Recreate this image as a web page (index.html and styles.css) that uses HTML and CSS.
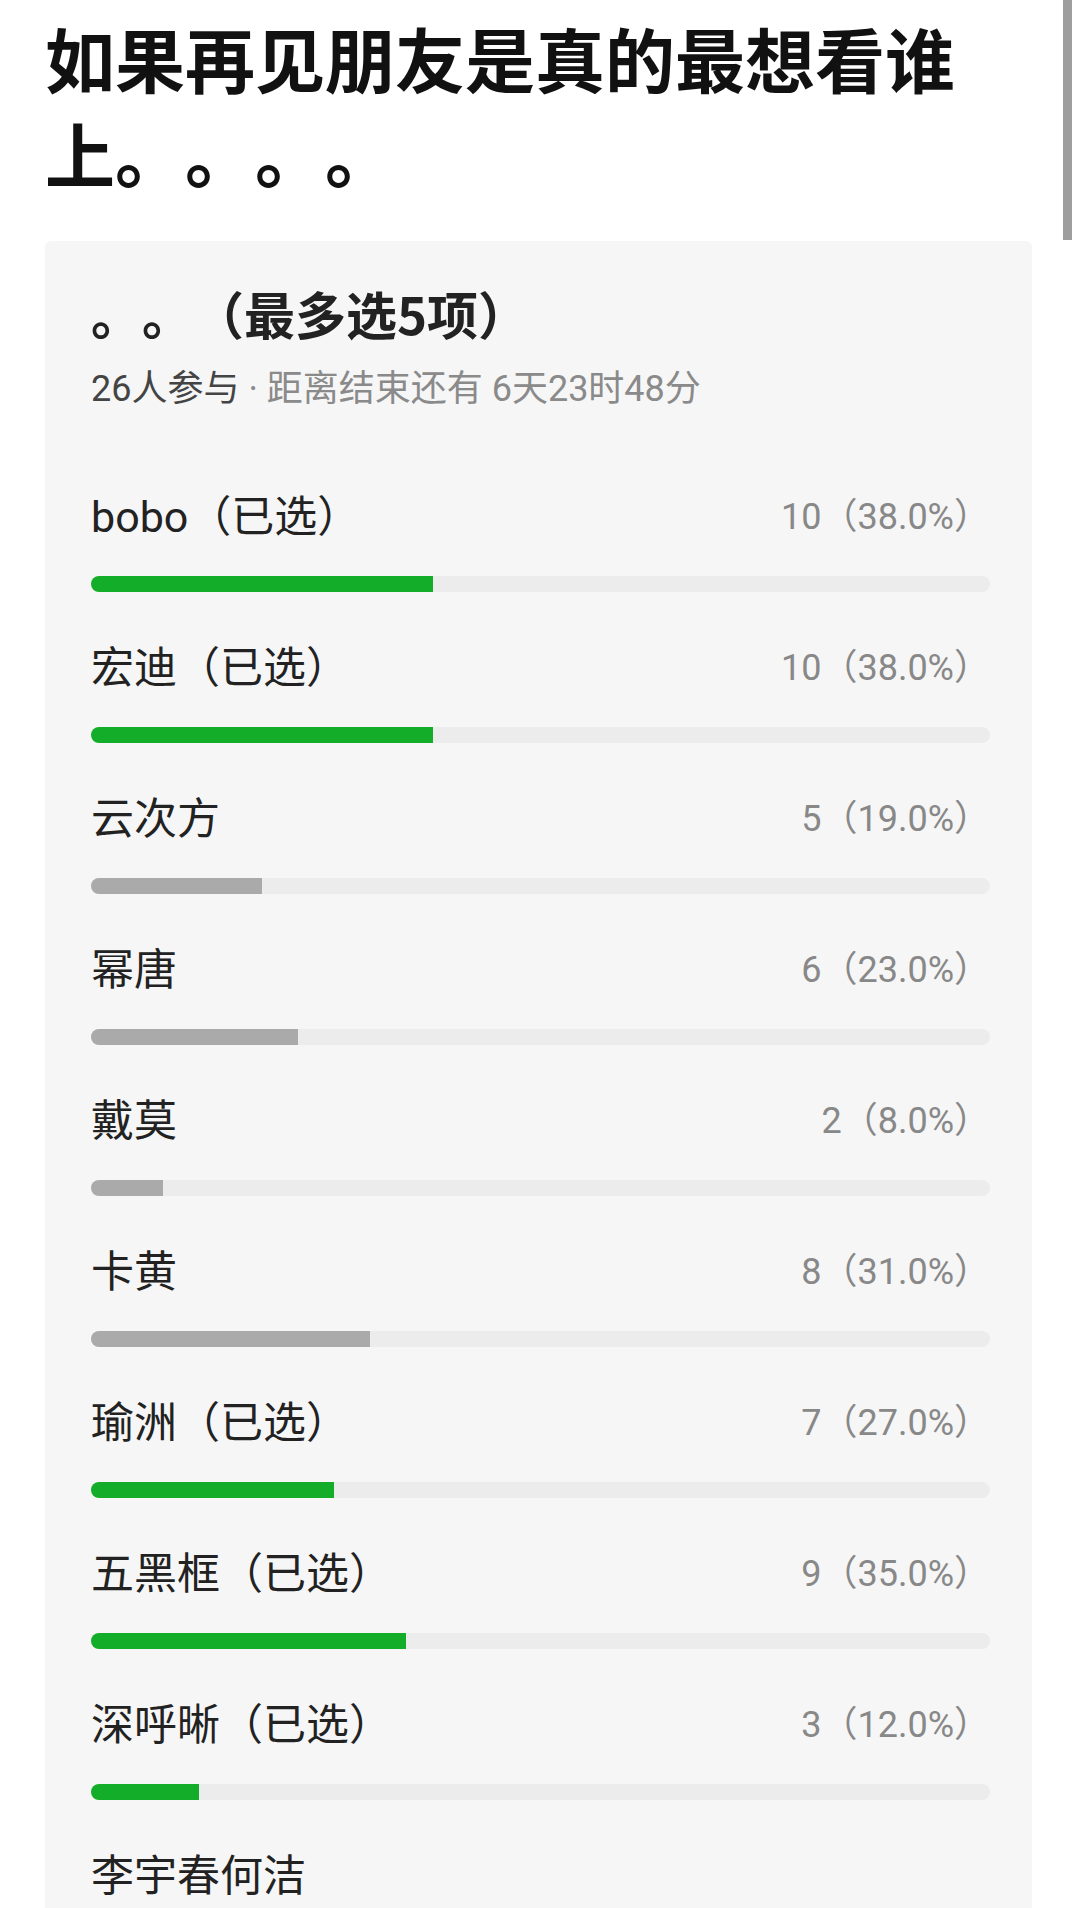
FILE: index.html
```html
<!DOCTYPE html>
<html lang="zh-CN">
<head>
  <meta charset="UTF-8">
  <meta name="viewport" content="width=device-width, initial-scale=1.0">
  <title>投票</title>
  <link rel="stylesheet" href="styles.css">
</head>
<body>
  <div class="scrollbar"></div>

  <div class="page">
    <h1 class="title">如果再见朋友是真的最想看谁上。。。。</h1>

    <div class="poll">
      <div class="poll-title">。。（最多选5项）</div>
      <div class="poll-meta"><span class="joined">26人参与</span> · 距离结束还有 6天23时48分</div>

      <div class="options">
        <div class="option">
          <div class="option-head">
            <span class="option-name">bobo（已选）</span>
            <span class="option-count">10（38.0%）</span>
          </div>
          <div class="track"><div class="fill picked" style="width: 38%"></div></div>
        </div>

        <div class="option">
          <div class="option-head">
            <span class="option-name">宏迪（已选）</span>
            <span class="option-count">10（38.0%）</span>
          </div>
          <div class="track"><div class="fill picked" style="width: 38%"></div></div>
        </div>

        <div class="option">
          <div class="option-head">
            <span class="option-name">云次方</span>
            <span class="option-count">5（19.0%）</span>
          </div>
          <div class="track"><div class="fill" style="width: 19%"></div></div>
        </div>

        <div class="option">
          <div class="option-head">
            <span class="option-name">幂唐</span>
            <span class="option-count">6（23.0%）</span>
          </div>
          <div class="track"><div class="fill" style="width: 23%"></div></div>
        </div>

        <div class="option">
          <div class="option-head">
            <span class="option-name">戴莫</span>
            <span class="option-count">2（8.0%）</span>
          </div>
          <div class="track"><div class="fill" style="width: 8%"></div></div>
        </div>

        <div class="option">
          <div class="option-head">
            <span class="option-name">卡黄</span>
            <span class="option-count">8（31.0%）</span>
          </div>
          <div class="track"><div class="fill" style="width: 31%"></div></div>
        </div>

        <div class="option">
          <div class="option-head">
            <span class="option-name">瑜洲（已选）</span>
            <span class="option-count">7（27.0%）</span>
          </div>
          <div class="track"><div class="fill picked" style="width: 27%"></div></div>
        </div>

        <div class="option">
          <div class="option-head">
            <span class="option-name">五黑框（已选）</span>
            <span class="option-count">9（35.0%）</span>
          </div>
          <div class="track"><div class="fill picked" style="width: 35%"></div></div>
        </div>

        <div class="option">
          <div class="option-head">
            <span class="option-name">深呼晰（已选）</span>
            <span class="option-count">3（12.0%）</span>
          </div>
          <div class="track"><div class="fill picked" style="width: 12%"></div></div>
        </div>

        <div class="option">
          <div class="option-head">
            <span class="option-name">李宇春何洁</span>
          </div>
        </div>
      </div>
    </div>
  </div>
</body>
</html>
```

FILE: styles.css
```css
* {
  box-sizing: border-box;
}

html,
body {
  height: 1908px;
  overflow: hidden;
}

body {
  margin: 0;
  background: #fff;
  color: #222;
  font-family: Roboto, "Noto Sans CJK SC", sans-serif;
  text-spacing-trim: space-all;
}

.scrollbar {
  position: fixed;
  top: 0;
  right: 8px;
  width: 9px;
  height: 240px;
  background: #9e9e9e;
}

.page {
  padding: 10px 48px 0 45px;
}

.title {
  margin: 0;
  font-family: "Noto Sans CJK SC", sans-serif;
  font-size: 70px;
  line-height: 95px;
  font-weight: 700;
  color: #111;
}

.poll {
  margin-top: 41px;
  background: #f6f6f6;
  border-radius: 6px;
  padding: 42px 42px 40px 46px;
  min-height: 1700px;
}

.poll-title {
  font-family: "Noto Sans CJK SC", sans-serif;
  font-size: 51px;
  line-height: 60px;
  font-weight: 700;
  color: #222;
}

.poll-meta {
  margin-top: 22px;
  font-size: 36px;
  line-height: 48px;
  color: #8a8a8a;
}

.poll-meta .joined {
  color: #444;
}

.options {
  margin-top: 79px;
}

.option {
  padding-bottom: 51px;
}

.option-head {
  display: flex;
  justify-content: space-between;
  align-items: center;
  height: 50px;
  line-height: 50px;
  margin-bottom: 34px;
}

.option-name {
  font-size: 43px;
  color: #222;
}

.option-count {
  font-size: 36px;
  color: #888;
}

.track {
  height: 16px;
  background: #ececec;
  border-radius: 8px;
  overflow: hidden;
}

.fill {
  height: 100%;
  background: #aaa;
}

.fill.picked {
  background: #14ad2a;
}
```
